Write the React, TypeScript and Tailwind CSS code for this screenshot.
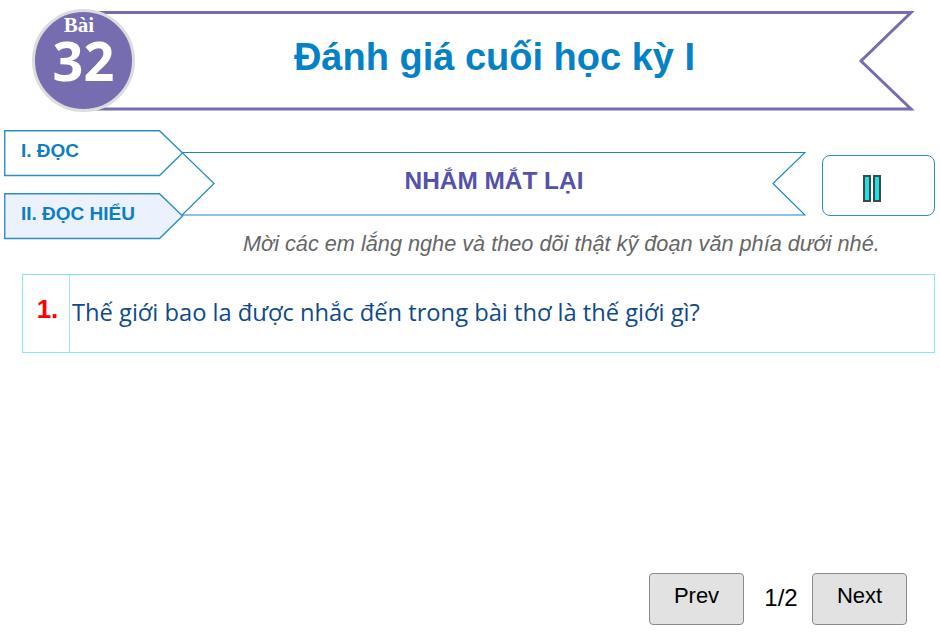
import React from 'react';

const SANS = 'font-["Liberation_Sans",Arial,sans-serif]';

const Tab: React.FC<{ label: string; active?: boolean }> = ({ label, active }) => (
    <div className="relative w-[180px] h-[47px] flex items-center pl-[17px]">
        <svg className="absolute inset-0" width="180" height="47" viewBox="0 0 180 47">
            <path d="M0.75 0.75 H155.5 L178.5 23 L155.5 45.5 H0.75 Z" fill={active ? '#ecf2fd' : '#ffffff'} stroke="#2b8fc4" strokeWidth="1.4" />
        </svg>
        <span className="relative text-[19px] leading-none font-bold text-[#0b7fc1] -mt-[6px]">{label}</span>
    </div>
);

const PagerButton: React.FC<{ label: string }> = ({ label }) => (
    <button className="w-[95px] h-[52px] pb-[8px] bg-[#e2e2e2] border border-[#8a8a8a] rounded-[4px] text-[22px] text-black">{label}</button>
);

export default function App() {
    return (
        <div className={`w-[940px] h-[635px] bg-white overflow-hidden flex flex-col ${SANS}`}>
            {/* lesson header */}
            <div className="flex pt-[9px] pl-[32px] h-[130px] shrink-0">
                <div className="relative z-10 w-[103px] h-[103px] shrink-0 rounded-full bg-[#756db0] border-[3px] border-[#dcdcdc] flex flex-col items-center text-white font-bold">
                    <span className='font-["Liberation_Serif",serif] text-[21px] leading-[22px] mt-[2px] -ml-[9px]'>Bài</span>
                    <span className='font-["Open_Sans",sans-serif] text-[54px] leading-[40px] mt-[4px]'>32</span>
                </div>
                <div className="relative -ml-[40px] w-[825px] h-[100px] mt-[2px] flex items-center justify-center">
                    <svg className="absolute inset-0" width="825" height="100" viewBox="0 0 825 100">
                        <path d="M0 1.5 H816 L766 50 L816 98 H0" fill="#ffffff" stroke="#756db0" strokeWidth="3" />
                    </svg>
                    <h1 className="relative text-[38px] leading-none font-bold text-[#0581c5] -mt-[8px] ml-[-26px]">Đánh giá cuối học kỳ I</h1>
                </div>
            </div>

            {/* reading section */}
            <div className="flex pl-[4px]">
                <div className="relative z-10 flex flex-col gap-[16px] w-[180px] shrink-0">
                    <Tab label="I. ĐỌC" />
                    <Tab label="II. ĐỌC HIỂU" active />
                </div>
                <div className="relative w-[624px] h-[64px] mt-[22px] -ml-[2px] flex items-center justify-center shrink-0">
                    <svg className="absolute inset-0" width="624" height="64" viewBox="0 0 624 64">
                        <path d="M0 0.5 H623 L591 31.5 L623 63 H0 M0 0.5 L32 31.5 L0 63" fill="none" stroke="#1a87c2" strokeWidth="1.2" />
                    </svg>
                    <h2 className="relative text-[24.4px] leading-none font-bold text-[#5452aa] -mt-[6px]">NHẮM MẮT LẠI</h2>
                </div>
                <button className="w-[113px] h-[61px] mt-[25px] ml-[16px] shrink-0 rounded-[8px] border-[1.5px] border-[#2b8fc4] flex items-center justify-center gap-[2px] pt-[6px] pr-[13px]">
                    <span className="w-[8px] h-[27px] bg-[#1fe0e0] border-[2.5px] border-[#3a4a4c]" />
                    <span className="w-[8px] h-[27px] bg-[#1fe0e0] border-[2.5px] border-[#3a4a4c]" />
                </button>
            </div>

            <p className="pl-[243px] mt-[-8px] text-[21.7px] leading-[24px] italic text-[#666666] h-[42px]">Mời các em lắng nghe và theo dõi thật kỹ đoạn văn phía dưới nhé.</p>

            {/* question */}
            <div className="ml-[22px] w-[913px] h-[79px] flex border-[1.5px] border-[#86e6fc] shrink-0">
                <div className="w-[47px] shrink-0 border-r-[1.5px] border-[#9eeafc] flex justify-center pt-[19px] pl-[3px]">
                    <span className="text-[26px] leading-[30px] font-bold text-[#ff0000]">1.</span>
                </div>
                <p className='pl-[2px] pt-[21px] font-["Open_Sans",sans-serif] text-[23.7px] leading-[32px] text-[#0e4a8a]'>Thế giới bao la được nhắc đến trong bài thơ là thế giới gì?</p>
            </div>

            {/* pager */}
            <div className="mt-auto mb-[10px] mr-[33px] flex justify-end items-center">
                <PagerButton label="Prev" />
                <span className="w-[68px] pl-[6px] text-center text-[24px] text-black -mt-[2px]">1/2</span>
                <PagerButton label="Next" />
            </div>
        </div>
    );
}
